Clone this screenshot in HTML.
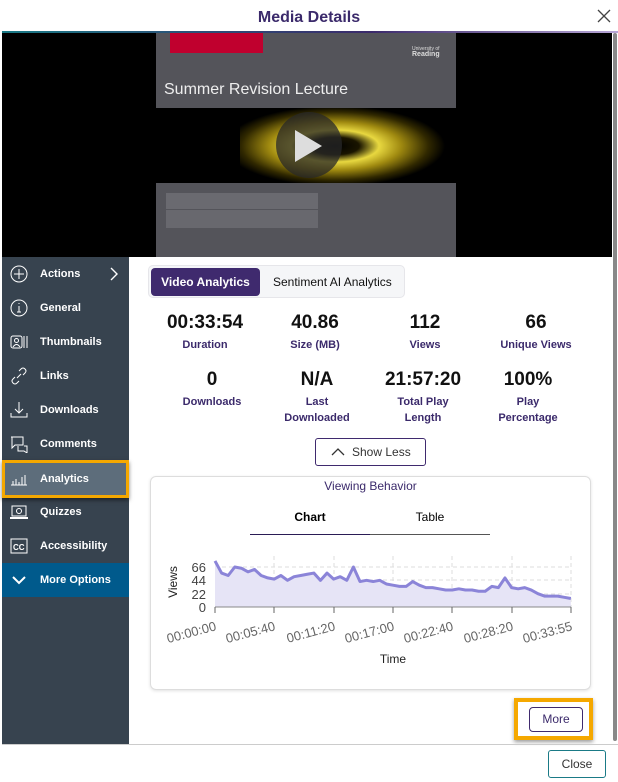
<!DOCTYPE html>
<html><head><meta charset="utf-8"><style>
*{box-sizing:border-box;margin:0;padding:0}
body{width:618px;height:782px;background:#fff;font-family:"Liberation Sans",sans-serif;position:relative;overflow:hidden}
.a{position:absolute}
.hdr{left:0;top:0;width:618px;height:31px;text-align:center;font-weight:bold;font-size:16px;color:#3b2a6b;line-height:36px}
.grad{left:2px;top:31px;width:616px;height:2px;background:linear-gradient(90deg,#1a7a86,#3b2a6b 60%,#b7a6d6)}
.side{left:2px;top:257px;width:127px;height:487px;background:#37434f}
.it{position:absolute;left:0;width:127px;height:34px;color:#fff;font-size:11px;font-weight:bold;line-height:34px;padding-left:38px}
.ic{position:absolute;left:8px;top:8px;width:18px;height:18px}
.st{text-align:center;width:100px}
.sv{font-size:19px;font-weight:bold;color:#111;line-height:22px;margin-bottom:3px}
.sl{font-size:11px;font-weight:bold;color:#3b2a6b;line-height:16px}
</style></head><body>
<div class="a hdr">Media Details</div>
<svg class="a" style="left:596px;top:8px" width="16" height="16"><path d="M2 2L14 14M14 2L2 14" stroke="#444" stroke-width="1.3"/></svg>
<div class="a grad"></div>
<div class="a" style="left:2px;top:33px;width:610px;height:224px;background:#000"></div>
<div class="a" style="left:612px;top:33px;width:6px;height:708px;background:#fff"><div style="margin-left:1px;width:4px;height:708px;background:#888;border-radius:2px"></div></div>
<div class="a" style="left:156px;top:33px;width:300px;height:75px;background:#54545a"></div>
<div class="a" style="left:170px;top:33px;width:93px;height:20px;background:#c0002e"></div>
<div class="a" style="left:412px;top:46px;color:#ddd;font-size:5px;line-height:6px">University of<br><b style="font-size:7px">Reading</b></div>
<div class="a" style="left:164px;top:81px;color:#eee;font-size:16px">Summer Revision Lecture</div>
<div class="a" style="left:156px;top:108px;width:300px;height:75px;background:#000"></div>
<div class="a" style="left:240px;top:108px;width:216px;height:75px;background:radial-gradient(ellipse 110px 40px at 95px 38px,#000 0%,#1a1500 22%,#e8d840 40%,#a08a10 60%,#302800 85%,#000 100%)"></div>
<div class="a" style="left:276px;top:112px;width:66px;height:66px;border-radius:50%;background:rgba(40,40,40,.75)"></div>
<svg class="a" style="left:290px;top:128px" width="36" height="36"><path d="M5 2L32 18L5 34Z" fill="#ddd"/></svg>
<div class="a" style="left:156px;top:183px;width:300px;height:74px;background:#54545a"></div>
<div class="a" style="left:166px;top:193px;width:152px;height:16px;background:#6a6a70"></div>
<div class="a" style="left:166px;top:210px;width:152px;height:18px;background:#68686e"></div>

<div class="a side">
<div class="it" style="top:0">Actions<svg class="ic" viewBox="0 0 18 18"><circle cx="9" cy="9" r="8" fill="none" stroke="#fff"/><path d="M9 4V14M4 9H14" stroke="#fff"/></svg><svg style="position:absolute;left:107px;top:10px" width="10" height="14"><path d="M2 1L8 7L2 13" fill="none" stroke="#fff" stroke-width="1.4"/></svg></div>
<div class="it" style="top:34px">General<svg class="ic" viewBox="0 0 18 18"><circle cx="9" cy="9" r="8" fill="none" stroke="#fff"/><path d="M9 7V13M7 13H11M9 4V5" stroke="#fff"/></svg></div>
<div class="it" style="top:68px">Thumbnails<svg class="ic" viewBox="0 0 18 18"><rect x="1" y="3" width="11" height="12" rx="2" fill="none" stroke="#fff"/><circle cx="6.5" cy="7.5" r="2" fill="none" stroke="#fff"/><path d="M3 14Q6.5 9 10 14M14 3V15M17 3V15" fill="none" stroke="#fff"/></svg></div>
<div class="it" style="top:102px">Links<svg class="ic" viewBox="0 0 18 18"><path d="M7 11L11 7M9 4L11 2Q13 0 15 2Q17 4 15 6L13 8M9 14L7 16Q5 18 3 16Q1 14 3 12L5 10" fill="none" stroke="#fff"/></svg></div>
<div class="it" style="top:136px">Downloads<svg class="ic" viewBox="0 0 18 18"><path d="M9 1V12M5 8L9 12L13 8M1 12V16H17V12" fill="none" stroke="#fff"/></svg></div>
<div class="it" style="top:170px">Comments<svg class="ic" viewBox="0 0 18 18"><path d="M1 2H13V10H5L2 13V2ZM8 11V16H14L17 18V11H14" fill="none" stroke="#fff"/></svg></div>
<div class="it" style="top:203px;left:0;height:38px;border:3px solid #f5a800;background:#5d6d7b;line-height:32px;padding-left:35px;width:127px;box-shadow:0 2px 4px rgba(0,0,0,.5)">Analytics<svg class="ic" style="left:5px;top:7px" viewBox="0 0 18 18"><path d="M1 15H17M3 15V11M6 15V9M9 15V12M12 15V7M15 15V5" fill="none" stroke="#fff"/></svg></div>
<div class="it" style="top:238px">Quizzes<svg class="ic" viewBox="0 0 18 18"><rect x="2" y="3" width="14" height="10" fill="none" stroke="#fff"/><circle cx="9" cy="8" r="2.5" fill="none" stroke="#fff"/><path d="M0 15H18" stroke="#fff" stroke-width="2"/></svg></div>
<div class="it" style="top:272px">Accessibility<svg class="ic" viewBox="0 0 18 18"><rect x="1" y="2" width="16" height="14" fill="none" stroke="#fff"/><text x="3" y="13" font-size="8" fill="#fff" font-family="Liberation Sans">CC</text></svg></div>
<div class="it" style="top:306px;background:#005a8c">More Options<svg class="ic" viewBox="0 0 18 18"><path d="M3 6L9 12L15 6" fill="none" stroke="#fff" stroke-width="2"/></svg></div>
</div>

<div class="a" style="left:148px;top:265px;width:257px;height:33px;background:#f5f6f8;border:1px solid #e6e6ea;border-radius:5px"></div>
<div class="a" style="left:151px;top:268px;width:109px;height:28px;background:#3f2a6e;border-radius:4px;color:#fff;font-weight:bold;font-size:12px;text-align:center;line-height:28px">Video Analytics</div>
<div class="a" style="left:273px;top:268px;font-size:12px;line-height:28px;color:#111">Sentiment AI Analytics</div>

<div class="a st" style="left:155px;top:312px"><div class="sv">00:33:54</div><div class="sl">Duration</div></div>
<div class="a st" style="left:265px;top:312px"><div class="sv">40.86</div><div class="sl">Size (MB)</div></div>
<div class="a st" style="left:375px;top:312px"><div class="sv">112</div><div class="sl">Views</div></div>
<div class="a st" style="left:486px;top:312px"><div class="sv">66</div><div class="sl">Unique Views</div></div>
<div class="a st" style="left:162px;top:369px"><div class="sv">0</div><div class="sl">Downloads</div></div>
<div class="a st" style="left:267px;top:369px"><div class="sv">N/A</div><div class="sl">Last<br>Downloaded</div></div>
<div class="a st" style="left:373px;top:369px"><div class="sv">21:57:20</div><div class="sl">Total Play<br>Length</div></div>
<div class="a st" style="left:478px;top:369px"><div class="sv">100%</div><div class="sl">Play<br>Percentage</div></div>

<div class="a" style="left:315px;top:438px;width:111px;height:28px;border:1px solid #3f2a6e;border-radius:3px;font-size:12px;color:#333;line-height:26px;padding-left:36px">Show Less<svg style="position:absolute;left:15px;top:8px" width="14" height="10"><path d="M1 8L7 2L13 8" fill="none" stroke="#333" stroke-width="1.3"/></svg></div>

<div class="a" style="left:150px;top:476px;width:441px;height:214px;border:1px solid #ddd;border-radius:6px;box-shadow:0 1px 3px rgba(0,0,0,.12)"></div>
<div class="a" style="left:150px;top:479px;width:441px;text-align:center;font-size:12px;color:#3b2a6b">Viewing Behavior</div>
<div class="a" style="left:250px;top:510px;width:120px;text-align:center;font-size:12px;font-weight:bold">Chart</div>
<div class="a" style="left:370px;top:510px;width:120px;text-align:center;font-size:12px">Table</div>
<div class="a" style="left:250px;top:534px;width:120px;height:1px;background:#2a1c55"></div>
<div class="a" style="left:370px;top:534px;width:120px;height:1px;background:#555"></div>

<svg class="a" style="left:0;top:0" width="618" height="782">
<g stroke="#ddd" stroke-dasharray="4,3" stroke-width="1">
<path d="M215 567H571M215 580H571M215 594H571M274 556V607M334 556V607M393 556V607M452 556V607M512 556V607M571 556V607"/>
</g>
<g transform="translate(215,607) scale(6.59,-0.606)">
<polygon fill="#e6e4f6" points="0,0 0,76 1,56 2,52 3,66 4,64 5,58 6,62 7,52 8,48 9,46 10,52 11,44 12,50 13,52 14,54 15,56 16,44 17,56 18,46 19,50 20,44 21,66 22,42 23,44 24,42 25,44 26,38 27,36 28,34 29,34 30,42 31,36 32,32 33,32 34,30 35,28 36,28 37,30 38,28 39,28 40,26 41,26 42,34 43,32 44,48 45,32 46,30 47,32 48,28 49,22 50,18 51,18 52,18 53,16 54,14 54,0"/>
<polyline fill="none" stroke="#8b84d8" stroke-width="3" vector-effect="non-scaling-stroke" stroke-linejoin="round" points="0,76 1,56 2,52 3,66 4,64 5,58 6,62 7,52 8,48 9,46 10,52 11,44 12,50 13,52 14,54 15,56 16,44 17,56 18,46 19,50 20,44 21,66 22,42 23,44 24,42 25,44 26,38 27,36 28,34 29,34 30,42 31,36 32,32 33,32 34,30 35,28 36,28 37,30 38,28 39,28 40,26 41,26 42,34 43,32 44,48 45,32 46,30 47,32 48,28 49,22 50,18 51,18 52,18 53,16 54,14"/>
</g>
<path d="M215 607H571" stroke="#888"/>
<g stroke="#666"><path d="M215 607V613M274 607V613M334 607V613M393 607V613M452 607V613M512 607V613M571 607V613"/></g>
<g font-family="Liberation Sans" font-size="13" fill="#444" text-anchor="end">
<text x="206" y="572">66</text><text x="206" y="585">44</text><text x="206" y="599">22</text><text x="206" y="612">0</text>
<g fill="#666" font-size="13">
<text transform="translate(217,630) rotate(-15)">00:00:00</text>
<text transform="translate(276,630) rotate(-15)">00:05:40</text>
<text transform="translate(336,630) rotate(-15)">00:11:20</text>
<text transform="translate(395,630) rotate(-15)">00:17:00</text>
<text transform="translate(454,630) rotate(-15)">00:22:40</text>
<text transform="translate(514,630) rotate(-15)">00:28:20</text>
<text transform="translate(573,630) rotate(-15)">00:33:55</text>
</g>
<text transform="translate(177,582) rotate(-90)" text-anchor="middle" fill="#222" font-size="12">Views</text>
<text x="393" y="663" text-anchor="middle" fill="#222" font-size="12">Time</text>
</g>
</svg>

<div class="a" style="left:514px;top:698px;width:79px;height:42px;border:4px solid #f5a800;box-shadow:0 2px 4px rgba(0,0,0,.4)"></div>
<div class="a" style="left:529px;top:707px;width:54px;height:25px;border:1px solid #3f2a6e;border-radius:4px;font-size:12px;color:#3b2a6b;text-align:center;line-height:23px;background:#fff">More</div>
<div class="a" style="left:2px;top:744px;width:616px;height:1px;background:#ccc"></div>
<div class="a" style="left:548px;top:750px;width:58px;height:28px;border:1px solid #1a7a86;border-radius:3px;font-size:12px;color:#333;text-align:center;line-height:26px">Close</div>
</body></html>
